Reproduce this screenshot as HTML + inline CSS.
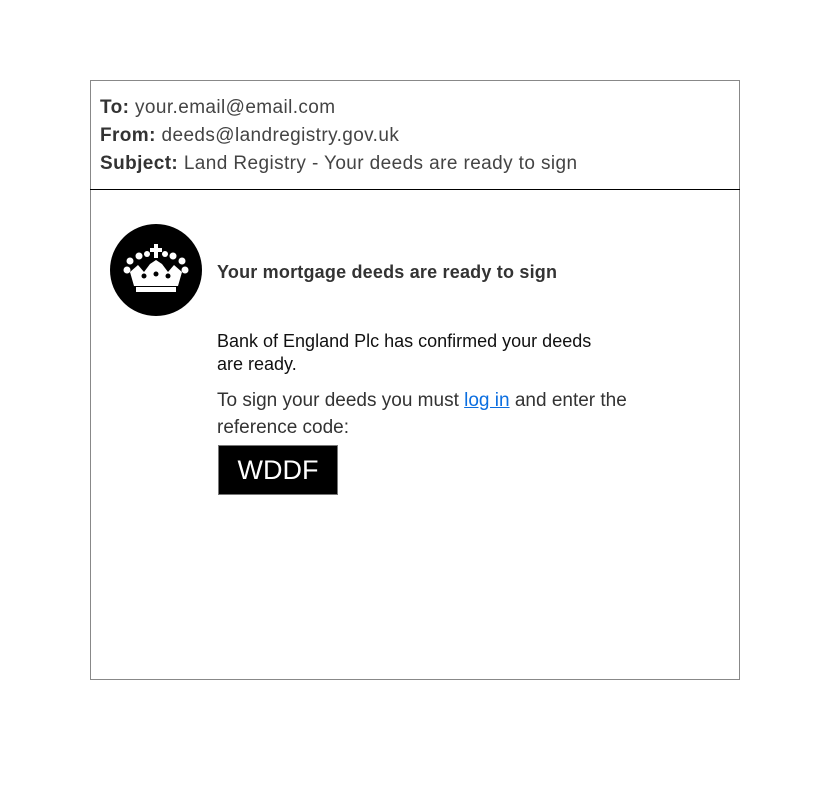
<!DOCTYPE html>
<html><head><style>
body{margin:0;width:840px;height:800px;background:#fff;font-family:"Liberation Sans",sans-serif;position:relative}
.box{position:absolute;left:90px;top:80px;width:648px;height:598px;border:1px solid #888}
.hdr{position:absolute;left:9px;top:13px;font-size:19px;line-height:28px;color:#333;letter-spacing:0.4px}
.hdr b{color:#333}
.hdr span{font-weight:300;color:#444}
.sep{position:absolute;left:-1px;top:108px;width:650px;height:1px;background:#000}
.logo{position:absolute;left:19px;top:143px;width:92px;height:92px;border-radius:50%;background:#000}
.t{position:absolute;color:#222}
a{color:#0b6ee0;text-decoration:underline}
.code{position:absolute;left:127px;top:364px;width:118px;height:48px;background:#000;border:1px solid #777;color:#fff;font-size:27px;line-height:48px;text-align:center}
</style></head><body>
<div class="box">
<div class="hdr"><b>To:</b> <span>your.email@email.com</span><br><b>From:</b> <span>deeds@landregistry.gov.uk</span><br><b>Subject:</b> <span>Land Registry - Your deeds are ready to sign</span></div>
<div class="sep"></div>
<div class="logo"><svg width="92" height="92" viewBox="0 0 92 92">
<g fill="#fff">
<rect x="44" y="20" width="4" height="14"/><rect x="40" y="24" width="12" height="4"/>
<circle cx="20" cy="37" r="3.5"/><circle cx="29" cy="32" r="3.5"/><circle cx="37" cy="30" r="3"/><circle cx="55" cy="30" r="3"/><circle cx="63" cy="32" r="3.5"/><circle cx="72" cy="37" r="3.5"/>
<circle cx="17" cy="46" r="3.5"/><circle cx="75" cy="46" r="3.5"/>
<path d="M20 48 L28 41 L34 48 L40 40 L46 36 L52 40 L58 48 L64 41 L72 48 L68 62 L24 62 Z"/>
<rect x="26" y="63" width="40" height="5"/>
</g>
<g fill="#000"><circle cx="34" cy="52" r="2.5"/><circle cx="46" cy="50" r="2.5"/><circle cx="58" cy="52" r="2.5"/></g>
</svg></div>
<div class="t" style="left:126px;top:181px;font-size:18px;font-weight:bold;color:#333;letter-spacing:0.2px">Your mortgage deeds are ready to sign</div>
<div class="t" style="left:126px;top:249px;font-size:18px;line-height:23px;color:#111;width:405px">Bank of England Plc has confirmed your deeds are ready.</div>
<div class="t" style="left:126px;top:306px;font-size:19px;line-height:27px;color:#333;width:420px">To sign your deeds you must <a>log in</a> and enter the reference code:</div>
<div class="code">WDDF</div>
</div>
</body></html>
